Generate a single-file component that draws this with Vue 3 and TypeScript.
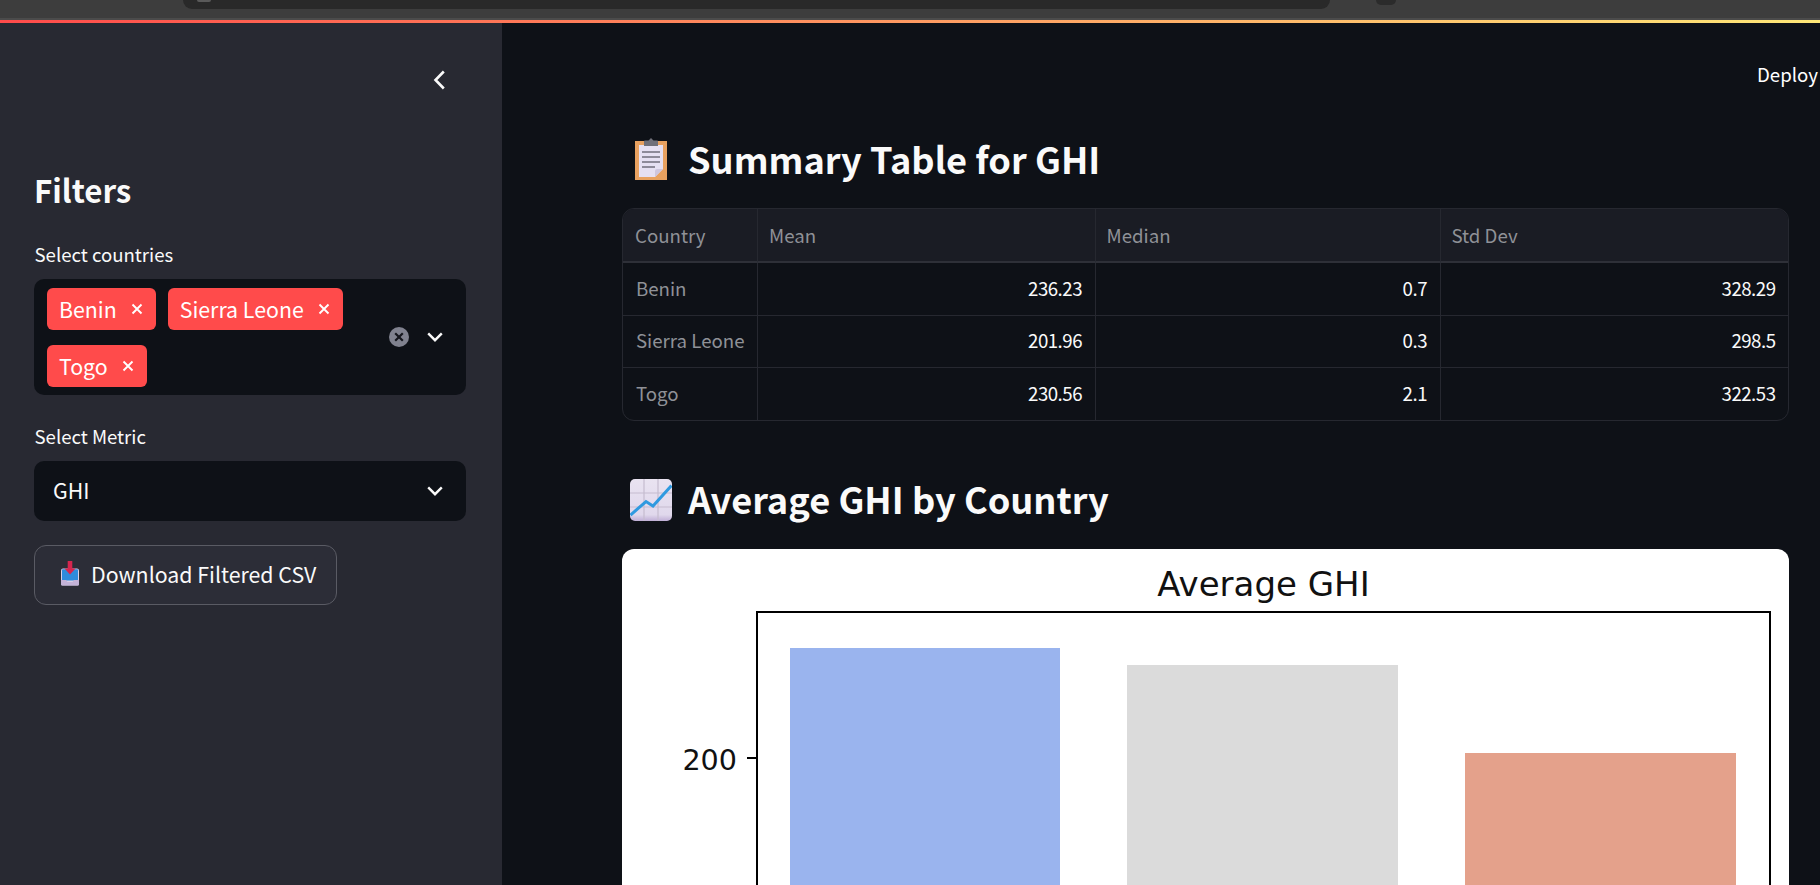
<script setup lang="ts">
interface Row { country: string; mean: string; median: string; std: string }
const rows: Row[] = [
  { country: 'Benin', mean: '236.23', median: '0.7', std: '328.29' },
  { country: 'Sierra Leone', mean: '201.96', median: '0.3', std: '298.5' },
  { country: 'Togo', mean: '230.56', median: '2.1', std: '322.53' },
]
</script>

<template>
  <div class="page">
    <div class="browser">
      <div class="address"><span class="address-dot"></span></div>
      <div class="browser-btn"></div>
    </div>
    <div class="decoration"></div>
    <div class="body">
      <aside class="sidebar">
        <div class="collapse-row">
          <svg width="16" height="20" viewBox="0 0 16 20" fill="none" stroke="#fafafa" stroke-width="2.6"><path d="M12.800 1.500 4.500 10 12.800 18.500" /></svg>
        </div>
        <h2 class="filters">Filters</h2>
        <div class="label">Select countries</div>
        <div class="multi">
          <div class="tags">
            <span class="tag">Benin<svg class="x" width="12" height="12" viewBox="0 0 12 12" stroke="#fff" stroke-width="1.9"><path d="M1.5 1.5l9 9M10.5 1.5l-9 9" /></svg></span>
            <span class="tag">Sierra Leone<svg class="x" width="12" height="12" viewBox="0 0 12 12" stroke="#fff" stroke-width="1.9"><path d="M1.5 1.5l9 9M10.5 1.5l-9 9" /></svg></span>
            <span class="tag">Togo<svg class="x" width="12" height="12" viewBox="0 0 12 12" stroke="#fff" stroke-width="1.9"><path d="M1.5 1.5l9 9M10.5 1.5l-9 9" /></svg></span>
          </div>
          <svg class="clear" width="20" height="20" viewBox="0 0 20 20"><circle cx="10" cy="10" r="10" fill="#80828f" /><path d="M6.2 6.2l7.6 7.6M13.8 6.2l-7.6 7.6" stroke="#14161d" stroke-width="2.2" /></svg>
          <svg class="chev" width="16" height="10" viewBox="0 0 16 10" fill="none" stroke="#fafafa" stroke-width="2.4"><path d="M1.2 1.4 8 8.2l6.8-6.8" /></svg>
        </div>
        <div class="label second">Select Metric</div>
        <div class="select">
          <span class="lift">GHI</span>
          <svg class="chev" width="16" height="10" viewBox="0 0 16 10" fill="none" stroke="#fafafa" stroke-width="2.4"><path d="M1.2 1.4 8 8.2l6.8-6.8" /></svg>
        </div>
        <button class="download">
          <svg class="dl-icon" width="20" height="25" viewBox="0 0 20 25">
            <path d="M1 9.5q0-2 2-2h14q2 0 2 2V23q0 1.500-1.500 1.500h-15Q1 24.500 1 23z" fill="#d9cfe6" />
            <path d="M2 9q0-.7.7-.7h14.600q.7 0 .7.700v10.500H2z" fill="#2f8bdc" />
            <path d="M1 19h5l1.500 2h5l1.500-2h5v4q0 1.500-1.500 1.500h-15Q1 24.500 1 23z" fill="#c4b3d8" />
            <path d="M7.700 0h4.600v7.500h3.200L10 13.500 4.500 7.500h3.200z" fill="#d6264f" />
          </svg>
          <span class="lift">Download Filtered CSV</span>
        </button>
      </aside>

      <main class="main">
        <div class="topbar"><span class="deploy">Deploy</span></div>
        <div class="content">
          <h3 class="heading first">
            <svg class="emoji clip" width="32" height="42" viewBox="0 0 32 42">
              <rect x="0" y="3" width="32" height="39" fill="#e8a160" />
              <path d="M4 7h24v24l-8 8H4z" fill="#e6e0f2" />
              <path d="M20 39l8-8h-6q-2 0-2 2z" fill="#cfc6de" />
              <path d="M9 3q0-.5 1-.5h3.500L16 0l2.500 2.500H22q1 0 1 .5v5H9z" fill="#70707a" />
              <path d="M7 14h18M7 19h18M7 24h18M7 29h13" stroke="#8e8a99" stroke-width="1.800" />
            </svg>
            <span class="lift-small">Summary Table for GHI</span>
          </h3>
          <div class="table">
            <div class="cell head first-col">Country</div>
            <div class="cell head">Mean</div>
            <div class="cell head">Median</div>
            <div class="cell head last">Std Dev</div>
            <template v-for="(row, i) in rows" :key="row.country">
              <div class="cell name" :class="{ bottom: i === rows.length - 1 }">{{ row.country }}</div>
              <div class="cell num" :class="{ bottom: i === rows.length - 1 }">{{ row.mean }}</div>
              <div class="cell num" :class="{ bottom: i === rows.length - 1 }">{{ row.median }}</div>
              <div class="cell num last" :class="{ bottom: i === rows.length - 1 }">{{ row.std }}</div>
            </template>
          </div>
          <h3 class="heading second-h">
            <svg class="emoji chart" width="42" height="42" viewBox="0 0 42 42">
              <defs>
                <linearGradient id="chartBg" x1="0" y1="0" x2="0" y2="1">
                  <stop offset="0" stop-color="#e9e3f1" />
                  <stop offset="0.85" stop-color="#e0d8ec" />
                  <stop offset="1" stop-color="#bfaed6" />
                </linearGradient>
              </defs>
              <rect width="42" height="42" rx="5" fill="url(#chartBg)" />
              <path d="M14 0v42M28 0v42M0 14h42M0 28h42" stroke="#c5bccf" stroke-width="1.200" />
              <path d="M0.500 36 16 22.500 23 27 41.500 6.500" fill="none" stroke="#2f9ae0" stroke-width="3" />
            </svg>
            <span class="raise">Average GHI by Country</span>
          </h3>
          <div class="card">
            <div class="plot-title">Average GHI</div>
            <div class="plot">
              <div class="bar blue"></div>
              <div class="bar gray"></div>
              <div class="bar salmon"></div>
              <div class="tick"><span class="tick-label">200</span><span class="tick-mark"></span></div>
            </div>
          </div>
        </div>
      </main>
    </div>
  </div>
</template>

<style>
html, body { margin: 0; background: #0e1117; overflow: hidden; }
</style>

<style scoped>
.page {
  width: 1820px;
  height: 885px;
  display: flex;
  flex-direction: column;
  overflow: hidden;
  background: #0e1117;
  color: #fafafa;
  font-family: "Noto Sans CJK SC", "Source Sans Pro", "Noto Sans", sans-serif;
}
.browser {
  height: 18px;
  border-bottom: 2px solid #4b4b4b;
  background: #3d3d3d;
  display: flex;
  align-items: flex-start;
  padding-left: 183px;
  flex: none;
}
.address {
  width: 1147px;
  height: 9px;
  background: #292929;
  border-radius: 0 0 16px 16px;
  padding-left: 14px;
  box-sizing: border-box;
}
.address-dot {
  display: block;
  width: 14px;
  height: 1.500px;
  background: #5a5a5a;
  border-radius: 0 0 7px 7px;
}
.browser-btn {
  width: 20px;
  height: 4.500px;
  background: #2b2b2b;
  border-radius: 0 0 5px 5px;
  margin-left: 46px;
}
.decoration {
  height: 3px;
  flex: none;
  background: linear-gradient(90deg, #ff4b4b, #ffe878);
}
.body {
  flex: 1;
  min-height: 0;
  display: flex;
}
.sidebar {
  width: 502px;
  flex: none;
  box-sizing: border-box;
  background: #282932;
  padding: 0 36px 0 34px;
}
.collapse-row {
  height: 20px;
  margin-top: 47px;
  padding-right: 19px;
  display: flex;
  justify-content: flex-end;
}
.filters {
  margin: 78px 0 0;
  font-size: 31.300px;
  line-height: 44px;
  font-weight: 600;
}
.label {
  margin: 30px 0 0 0.500px;
  font-size: 18.600px;
  line-height: 24px;
  height: 24px;
}
.label.second { margin-top: 29px; }
.multi {
  margin-top: 13px;
  height: 116px;
  background: #0e1117;
  border-radius: 10px;
  display: flex;
  align-items: center;
  padding: 0 23px 0 13px;
}
.tags {
  width: 340px;
  display: flex;
  flex-wrap: wrap;
  gap: 15px 12px;
}
.tag {
  height: 42px;
  box-sizing: border-box;
  padding: 0 12.500px 0 12px;
  background: #ff4b4b;
  border-radius: 6px;
  display: inline-flex;
  align-items: center;
  gap: 14.500px;
  font-size: 21.330px;
  line-height: 42px;
  color: #fff;
}
.x { flex: none; }
.clear { margin-left: 2px; flex: none; }
.chev { flex: none; }
.multi .chev { margin-left: 18px; margin-right: -2px; }
.select {
  margin-top: 13px;
  height: 60px;
  background: #0e1117;
  border-radius: 10px;
  display: flex;
  align-items: center;
  justify-content: space-between;
  padding: 0 23px 0 19px;
  font-size: 21.330px;
}
.lift { margin-bottom: 4px; }
.lift-small { margin-bottom: 2px; }
.download {
  margin-top: 24px;
  width: 303px;
  height: 60px;
  box-sizing: border-box;
  border: 1px solid #5a5b64;
  border-radius: 12px;
  background: #2c2d37;
  color: #fafafa;
  font: inherit;
  font-size: 21.330px;
  display: flex;
  align-items: center;
  padding: 0 0 0 25px;
  gap: 11px;
}
.dl-icon { flex: none; margin-top: -4px; }
.main {
  flex: 1;
  min-width: 0;
  overflow: hidden;
}
.topbar {
  height: 82px;
  position: relative;
}
.deploy {
  position: absolute;
  left: 1255px;
  top: 39px;
  font-size: 18.670px;
  line-height: 24px;
  white-space: nowrap;
  color: #fff;
}
.content {
  margin-left: 120px;
  width: 1167px;
}
.heading {
  margin: 0;
  height: 42px;
  display: flex;
  align-items: center;
  font-size: 36.200px;
  line-height: 42px;
  font-weight: 600;
  color: #fafafa;
  white-space: nowrap;
}
.heading.first { margin-top: 33px; padding-left: 13px; gap: 21px; }
.heading.second-h { margin-top: 58px; padding-left: 8px; gap: 16px; }
.raise { margin-bottom: 3px; }
.emoji { flex: none; }
.table {
  margin-top: 28px;
  width: 1167px;
  box-sizing: border-box;
  display: grid;
  grid-template-columns: 135px 337.500px 345px 1fr;
  grid-template-rows: 54px 52.600px 52.600px 51.400px;
  border: 1px solid #262830;
  border-radius: 12px;
  overflow: hidden;
  font-size: 18.670px;
}
.cell {
  display: flex;
  align-items: center;
  padding: 0 12px 3px;
  border-right: 1px solid #262830;
  border-bottom: 1px solid #262830;
  white-space: nowrap;
  min-width: 0;
}
.cell.last { border-right: 0; }
.cell.bottom { border-bottom: 0; }
.head {
  background: #1a1c24;
  color: #8f9197;
  border-bottom-color: #2e3038;
  border-bottom-width: 2px;
  padding: 0 11px 2px;
}
.head.first-col { padding-left: 12px; }
.name { color: #8f9197; padding-left: 13px; padding-right: 0; }
.num { justify-content: flex-end; color: #fafafa; letter-spacing: -0.500px; padding-right: 12.500px; }
.card {
  margin-top: 28px;
  height: 400px;
  background: #fff;
  border-radius: 12px 12px 0 0;
  padding: 0 18px 0 134px;
  color: #000;
  font-family: "DejaVu Sans", sans-serif;
}
.plot-title {
  height: 62px;
  padding-top: 17px;
  box-sizing: border-box;
  font-size: 34px;
  line-height: 36px;
  text-align: center;
  color: #111;
}
.plot {
  position: relative;
  height: 320px;
  box-sizing: border-box;
  border: 2px solid #000;
  border-bottom: 0;
  display: grid;
  grid-template-columns: 270px 271px 271px;
  column-gap: 67px;
  padding: 0 0 0 32px;
  align-items: start;
}
.bar { height: 300px; }
.blue { margin-top: 35px; background: #9ab4ee; }
.gray { margin-top: 52px; background: #dbdbdb; }
.salmon { margin-top: 140px; background: #e4a18b; }
.tick {
  position: absolute;
  right: 100%;
  top: 127.500px;
  margin-right: 1px;
  display: flex;
  align-items: center;
  gap: 10px;
  font-size: 28.600px;
  line-height: 32px;
  color: #111;
}
.tick-label { margin-top: 4px; }
.tick-mark {
  width: 10px;
  height: 2px;
  background: #000;
}
</style>
